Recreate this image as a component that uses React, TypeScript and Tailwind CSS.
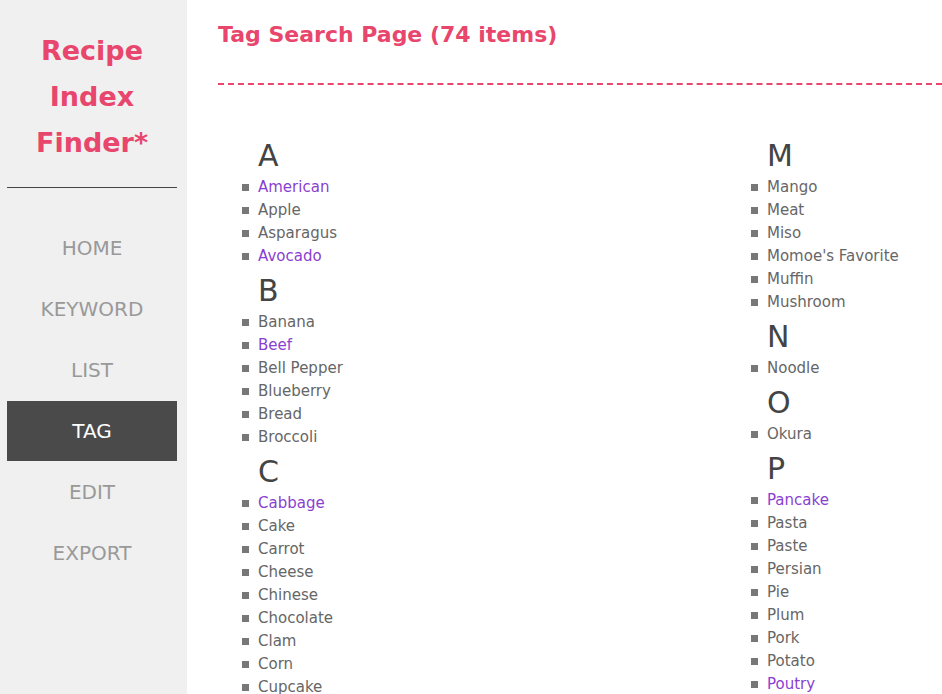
import React from 'react';

type Tag = { name: string; linked?: boolean };
type Group = { letter: string; tags: Tag[] };

const leftGroups: Group[] = [
  {
    letter: 'A',
    tags: [{ name: 'American', linked: true }, { name: 'Apple' }, { name: 'Asparagus' }, { name: 'Avocado', linked: true }],
  },
  {
    letter: 'B',
    tags: [
      { name: 'Banana' },
      { name: 'Beef', linked: true },
      { name: 'Bell Pepper' },
      { name: 'Blueberry' },
      { name: 'Bread' },
      { name: 'Broccoli' },
    ],
  },
  {
    letter: 'C',
    tags: [
      { name: 'Cabbage', linked: true },
      { name: 'Cake' },
      { name: 'Carrot' },
      { name: 'Cheese' },
      { name: 'Chinese' },
      { name: 'Chocolate' },
      { name: 'Clam' },
      { name: 'Corn' },
      { name: 'Cupcake' },
    ],
  },
];

const rightGroups: Group[] = [
  {
    letter: 'M',
    tags: [
      { name: 'Mango' },
      { name: 'Meat' },
      { name: 'Miso' },
      { name: "Momoe's Favorite" },
      { name: 'Muffin' },
      { name: 'Mushroom' },
    ],
  },
  { letter: 'N', tags: [{ name: 'Noodle' }] },
  { letter: 'O', tags: [{ name: 'Okura' }] },
  {
    letter: 'P',
    tags: [
      { name: 'Pancake', linked: true },
      { name: 'Pasta' },
      { name: 'Paste' },
      { name: 'Persian' },
      { name: 'Pie' },
      { name: 'Plum' },
      { name: 'Pork' },
      { name: 'Potato' },
      { name: 'Poutry', linked: true },
    ],
  },
];

const navItems = ['HOME', 'KEYWORD', 'LIST', 'TAG', 'EDIT', 'EXPORT'];

const TagColumn: React.FC<{ groups: Group[] }> = ({ groups }) => (
  <div className="flex flex-col">
    {groups.map((g) => (
      <div key={g.letter}>
        <h3 className="pl-[16px] h-[43px] leading-[46px] text-[30px] text-[#444]">{g.letter}</h3>
        <ul>
          {g.tags.map((t) => (
            <li key={t.name} className="flex items-center h-[23px] text-[15px]">
              <span className="w-[7px] h-[7px] bg-[#777] mr-[9px] shrink-0" />
              <span className={t.linked ? 'text-[#8a3fd1]' : 'text-[#666]'}>{t.name}</span>
            </li>
          ))}
        </ul>
      </div>
    ))}
  </div>
);

export default function App() {
  return (
    <div
      className="flex h-[694px] overflow-hidden bg-white"
      style={{ fontFamily: '"Comic Sans MS", "DejaVu Sans", sans-serif' }}
    >
      {/* Sidebar */}
      <aside className="w-[187px] shrink-0 bg-[#f0f0f0] pl-[7px] pr-[10px]">
        <h1 className="pt-[28px] pb-[21px] text-center text-[27px] font-bold leading-[46px] text-[#e8466c]">
          Recipe
          <br />
          Index
          <br />
          Finder*
        </h1>
        <div className="border-t border-[#444]" />
        <nav className="mt-[30px] flex flex-col gap-[1px]">
          {navItems.map((item) => (
            <div
              key={item}
              className={
                'h-[60px] flex items-center justify-center text-[20px] ' +
                (item === 'TAG' ? 'bg-[#4a4a4a] text-white' : 'text-[#999]')
              }
            >
              {item}
            </div>
          ))}
        </nav>
      </aside>

      {/* Main */}
      <main className="flex-1 pl-[31px] pt-[19px]">
        <h2 className="text-[22px] font-bold leading-[32px] text-[#e8466c]">Tag Search Page (74 items)</h2>
        <div className="mt-[32px] border-b-2 border-dashed border-[#e8466c]" />
        <div className="mt-[48px] pl-[24px] grid grid-cols-[509px_1fr]">
          <TagColumn groups={leftGroups} />
          <TagColumn groups={rightGroups} />
        </div>
      </main>
    </div>
  );
}
